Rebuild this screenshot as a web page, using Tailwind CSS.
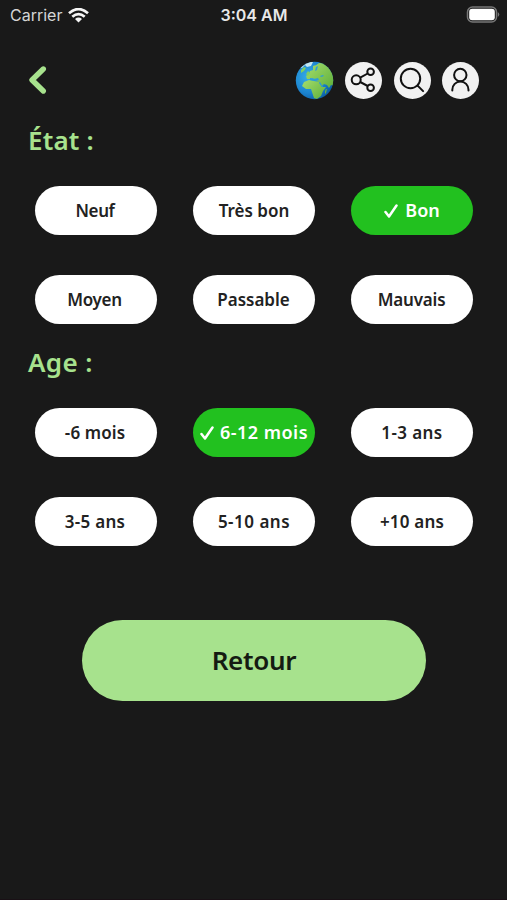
<!DOCTYPE html>
<html lang="fr">
<head>
<meta charset="utf-8">
<meta name="viewport" content="width=device-width">
<title>Filtres</title>
<script src="https://cdn.jsdelivr.net/npm/@tailwindcss/browser@4"></script>
</head>
<body class="bg-[#191919]">
<main class="flex h-[900px] w-[507px] flex-col overflow-hidden border-b border-[#191015] bg-[#191919] font-['Noto_Sans','Open_Sans',sans-serif]">
  <div class="grid h-[30px] shrink-0 grid-cols-3 items-center pr-[7px] pl-[10px] font-['Inter',sans-serif] text-[16px] text-[#e8e8e8]">
    <div class="flex items-center gap-[6px]">
      <span class="text-[#d5d5d5]">Carrier</span>
      <svg class="h-[15px] w-[21px]" viewBox="0 0 21 15" fill="none" stroke="#f5f5f5" stroke-width="2.7"><path d="M1 5.3Q10.500-3.100 20 5.300M4.300 8.800Q10.500 3.300 16.700 8.800"/><path d="M7 11Q10.500 8.200 14 11L10.500 14.600Z" fill="#f5f5f5" stroke="none"/></svg>
    </div>
    <div class="-ml-[2px] text-center font-semibold whitespace-nowrap">3:04 AM</div>
    <svg class="h-[18px] w-[34px] justify-self-end" viewBox="0 0 34 18"><rect x="1.500" y="1" width="29" height="15" rx="5" fill="#191919" stroke="#777" stroke-width="1.500"/><rect x="3.200" y="2.800" width="25.600" height="11.400" rx="3" fill="#fff"/><path d="M31.800 6q3 2.500 0 5z" fill="#777"/></svg>
  </div>

  <header class="flex h-[100px] shrink-0 items-center justify-between pr-[28px] pl-[28px]">
    <svg class="h-[30px] w-[20px]" viewBox="0 0 20 30" fill="none" stroke="#a7e28d" stroke-width="5.400" stroke-linecap="round" stroke-linejoin="round"><path d="M15.300 4 4 15 15.300 26"/></svg>
    <div class="flex items-center gap-[11.500px]">
      <svg class="size-[39px]" viewBox="0 0 39 39">
        <defs>
          <radialGradient id="sea" cx=".35" cy=".4" r=".65"><stop offset="0" stop-color="#35aeea"/><stop offset=".65" stop-color="#1b83cf"/><stop offset="1" stop-color="#0b5fa6"/></radialGradient>
          <linearGradient id="land" x1="0" x2="1" y1=".2" y2="1"><stop stop-color="#9fd968"/><stop offset="1" stop-color="#5fb03a"/></linearGradient>
          <clipPath id="disc"><circle cx="19.500" cy="19.500" r="18.700"/></clipPath>
        </defs>
        <g clip-path="url(#disc)">
          <path d="M0 0H39V39H0Z" fill="url(#sea)"/>
          <path d="M20 5 24 2 39 3V25l-3-1-2 3-2-3-3-1-2 2-3-4-3-1-1-2-3-1-2 1-3 0-1-3 3-2 1-3 3-1 0-4 3-1Z" fill="url(#land)"/>
          <path d="m9 21 5-2 5 1 5 1 3 5 4 0-3 4-2 5-4 3-3-1-2-6-1-3-5 0-4-3Z" fill="url(#land)"/>
          <path d="m6 9 3-3 2 1-2 3-3 2ZM11 13l2-3 2 2-2 3Z" fill="#7fce63"/>
          <path d="m5 6 6-5 7 0-2 4-4 1-2-2-3 3Z" fill="#c4e6ef"/>
          <path d="m15 17 4 1 4-1 1 2-3 1-6-1ZM21 6l2-1-1 4-2 1ZM25 15l3-1 1 1-3 1ZM25 21l3 5-1 0-3-4Z" fill="#2d9cd8"/>
          <path d="m30 30 1-2 1 0-1 4-1 1Z" fill="#65b23f"/>
        </g>
      </svg>
      <span class="size-[37px] rounded-full bg-[#f1f1f1]"><svg class="size-[37px]" viewBox="0 0 37 37" fill="none" stroke="#111" stroke-width="2"><circle cx="11.200" cy="17.800" r="4.500"/><circle cx="25.600" cy="9.800" r="3.300"/><circle cx="25.600" cy="25.800" r="3.300"/><path d="m15.200 15.700 7.500-4.200M15.200 20l7.500 4"/></svg></span>
      <span class="size-[37px] rounded-full bg-[#f1f1f1]"><svg class="size-[37px]" viewBox="0 0 37 37" fill="none" stroke="#111" stroke-width="2" stroke-linecap="round"><circle cx="16.500" cy="16.500" r="9.700"/><path d="m23.600 23.600 5.500 5.500"/></svg></span>
      <span class="size-[37px] rounded-full bg-[#f1f1f1]"><svg class="size-[37px]" viewBox="0 0 37 37" fill="none" stroke="#111" stroke-width="2" stroke-linecap="round"><circle cx="18.300" cy="13" r="6.200"/><path d="M10.300 28.500v-.8a8.100 8.300 0 0 1 16.200 0v.8"/></svg></span>
    </div>
  </header>

  <h1 class="h-[56px] shrink-0 pl-[28px] text-[26px] leading-[20px] font-semibold tracking-[0.2px] whitespace-nowrap text-[#a7e28d]">État :</h1>
  <section class="grid shrink-0 grid-cols-[repeat(3,122px)] gap-x-[36px] gap-y-[40px] pl-[35px] text-[17px] font-semibold whitespace-nowrap text-[#222]">
    <button class="h-[49px] rounded-full bg-white pr-[2px] tracking-[-0.4px]">Neuf</button>
    <button class="h-[49px] rounded-full bg-white">Très bon</button>
    <button class="flex h-[49px] items-center justify-center gap-[7px] rounded-full bg-[#22c11f] text-[18px] text-white"><svg class="h-[14px] w-[14px]" viewBox="0 0 14 14" fill="none" stroke="#fff" stroke-width="2.500" stroke-linecap="round" stroke-linejoin="round"><path d="m1.500 8 3.500 4.500L12.500 1.500"/></svg><span>Bon</span></button>
    <button class="h-[49px] rounded-full bg-white pr-[3px] tracking-[-0.3px]">Moyen</button>
    <button class="h-[49px] rounded-full bg-white pr-[1px]">Passable</button>
    <button class="h-[49px] rounded-full bg-white pr-[1px] tracking-[-0.2px]">Mauvais</button>
  </section>

  <h1 class="h-[84px] shrink-0 pt-[28px] pl-[28px] text-[26px] leading-[20px] font-semibold tracking-[0.4px] whitespace-nowrap text-[#a7e28d]">Age :</h1>
  <section class="grid shrink-0 grid-cols-[repeat(3,122px)] gap-x-[36px] gap-y-[40px] pl-[35px] text-[17px] font-semibold whitespace-nowrap text-[#222]">
    <button class="h-[49px] rounded-full bg-white pr-[2px] tracking-[0.1px]">-6 mois</button>
    <button class="flex h-[49px] items-center justify-center gap-[6px] rounded-full bg-[#22c11f] text-[18px] tracking-[0.5px] text-white"><svg class="h-[14px] w-[14px] shrink-0" viewBox="0 0 14 14" fill="none" stroke="#fff" stroke-width="2.500" stroke-linecap="round" stroke-linejoin="round"><path d="m1.500 8 3.500 4.500L12.500 1.500"/></svg><span>6-12 mois</span></button>
    <button class="h-[49px] rounded-full bg-white tracking-[0.4px]">1-3 ans</button>
    <button class="h-[49px] rounded-full bg-white pr-[2px] tracking-[0.3px]">3-5 ans</button>
    <button class="h-[49px] rounded-full bg-white tracking-[0.5px]">5-10 ans</button>
    <button class="h-[49px] rounded-full bg-white tracking-[0.2px]">+10 ans</button>
  </section>

  <button class="mt-[74px] ml-[82px] h-[81px] w-[344px] shrink-0 rounded-full bg-[#a7e28d] text-[26px] font-semibold tracking-[-0.3px] text-[#151b12]">Retour</button>
</main>
</body>
</html>
